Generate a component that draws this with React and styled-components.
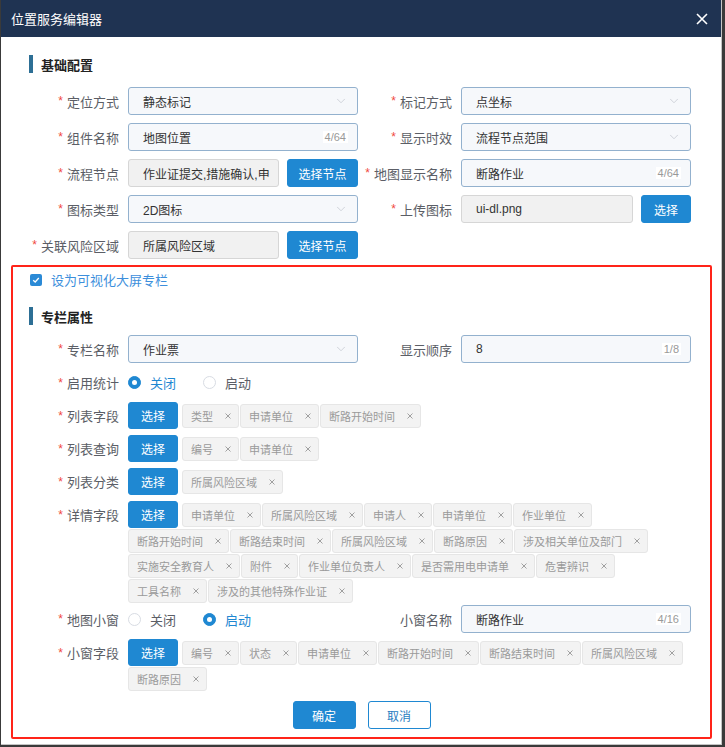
import React from 'react';
import styled, { createGlobalStyle } from 'styled-components';
import { ChevronDown } from 'lucide-react';

const GlobalStyle = createGlobalStyle`
  body {
    margin: 0;
    background: #3a3a3a;
    font-family: "Liberation Sans", "Noto Sans CJK SC", sans-serif;
  }
  * { box-sizing: border-box; }
`;

const BLUE = '#1f88d2';

const Dialog = styled.div`
  width: 721px;
  height: 745px;
  margin-left: 1px;
  background: #fff;
  border-right: 1px solid #c4c4c4;
  border-bottom: 1px solid #c4c4c4;
  overflow: hidden;
`;

const Header = styled.div`
  height: 37px;
  background: #1f3352;
  display: flex;
  align-items: center;
  justify-content: space-between;
  padding: 0 13px 0 10px;
  color: #fff;
  font-size: 13px;
`;

const Body = styled.div`
  padding: 0 9px 0 10px;
`;

const Section = styled.div`
  border: 2px solid ${p => (p.$outlined ? '#ff2419' : 'transparent')};
  border-radius: 2px;
  margin-top: ${p => p.$mt || 0}px;
  padding-bottom: ${p => p.$pb || 0}px;
`;

const SectionTitle = styled.div`
  display: flex;
  align-items: center;
  height: 18px;
  margin: ${p => p.$mt}px 0 ${p => p.$mb}px 16px;
  font-size: 13px;
  font-weight: bold;
  color: #222;
  &::before {
    content: '';
    width: 4px;
    height: 18px;
    background: #2d6f95;
    margin-right: 8px;
  }
`;

const Rows = styled.div`
  display: flex;
  flex-direction: column;
  gap: ${p => p.$gap || 0}px;
  padding-left: 22px;
`;

const Row = styled.div`
  display: grid;
  grid-template-columns: 323px 323px;
  column-gap: 10px;
  margin-top: ${p => p.$mt || 0}px;
`;

const Field = styled.div`
  display: flex;
  align-items: flex-start;
  gap: 9px;
  grid-column: ${p => (p.$wide ? '1 / -1' : 'auto')};
`;

const Label = styled.div`
  width: 84px;
  flex-shrink: 0;
  height: ${p => p.$h || 28}px;
  display: flex;
  align-items: center;
  justify-content: flex-end;
  white-space: nowrap;
  font-size: 13px;
  color: #5b5e66;
`;

const Star = styled.span`
  color: #f0483e;
  margin-right: 4px;
  font-size: 12px;
`;

const Control = styled.div`
  flex: 1;
  display: flex;
  gap: 8px;
  min-width: 0;
`;

const InputBox = styled.div`
  flex: 1;
  min-width: 0;
  height: 28px;
  display: flex;
  align-items: center;
  padding: 0 ${p => (p.$disabled ? 4 : 9)}px 0 14px;
  border: 1px solid ${p => (p.$disabled ? '#d6d6d6' : '#93b1ce')};
  border-radius: 3px;
  background: ${p => (p.$disabled ? '#f1f1f1' : '#f6f8fb')};
  font-size: 12px;
  color: #333;
`;

const InputText = styled.span`
  flex: 1;
  white-space: nowrap;
  overflow: hidden;
`;

const Counter = styled.span`
  font-size: 11px;
  color: #999;
  background: #fff;
  padding: 0 2px;
`;

const Button = styled.button`
  height: ${p => p.$h || 28}px;
  width: ${p => p.$w}px;
  flex-shrink: 0;
  border: 1px solid ${BLUE};
  border-radius: 3px;
  background: ${p => (p.$ghost ? '#fff' : BLUE)};
  color: ${p => (p.$ghost ? '#2a7dbf' : '#fff')};
  font-family: inherit;
  font-size: 12px;
  padding: 0;
  cursor: pointer;
`;

const CheckRow = styled.label`
  display: flex;
  align-items: center;
  gap: 9px;
  height: 13px;
  margin: 6px 0 0 17px;
  font-size: 13px;
  color: #3d8fdc;
`;

const CheckBox = styled.span`
  width: 12px;
  height: 12px;
  border-radius: 2px;
  background: #2b8ad6;
  display: flex;
  align-items: center;
  justify-content: center;
`;

const RadioGroup = styled.div`
  height: 27px;
  display: flex;
  align-items: center;
  gap: 27px;
`;

const RadioItem = styled.span`
  display: flex;
  align-items: center;
  gap: 9px;
  font-size: 13px;
  color: ${p => (p.$on ? BLUE : '#5b5e66')};
`;

const RadioDot = styled.span`
  width: 13px;
  height: 13px;
  border-radius: 50%;
  border: 1px solid ${p => (p.$on ? BLUE : '#d8dce3')};
  background: ${p => (p.$on ? BLUE : '#fff')};
  display: flex;
  align-items: center;
  justify-content: center;
  &::after {
    content: '';
    width: 5px;
    height: 5px;
    border-radius: 50%;
    background: ${p => (p.$on ? '#fff' : 'transparent')};
  }
`;

const TagWrap = styled.div`
  flex: 1;
  display: flex;
  flex-wrap: wrap;
  align-items: center;
  column-gap: 1px;
  row-gap: 1px;
  & > button {
    margin-right: 3px;
  }
`;

const TagBox = styled.span`
  height: 24px;
  display: inline-flex;
  align-items: center;
  padding: 0 7px 0 8px;
  border: 1px solid #e6e6e6;
  border-radius: 3px;
  background: #f3f3f3;
  font-size: 11px;
  color: #9a9a9a;
  white-space: nowrap;
`;

const TagClose = styled.svg`
  margin-left: 12px;
`;

const Footer = styled.div`
  display: flex;
  justify-content: center;
  gap: 12px;
  margin-top: 10px;
`;

const Select = ({ value }) => (
  <InputBox>
    <InputText>{value}</InputText>
    <ChevronDown size={14} strokeWidth={1.3} color="#c3c7cf" />
  </InputBox>
);

const Input = ({ value, count, disabled }) => (
  <InputBox $disabled={disabled}>
    <InputText>{value}</InputText>
    {count && <Counter>{count}</Counter>}
  </InputBox>
);

const Tag = ({ children }) => (
  <TagBox>
    {children}
    <TagClose width="6" height="6" viewBox="0 0 6 6">
      <path d="M0.5 0.5L5.5 5.5M5.5 0.5L0.5 5.5" stroke="#a0a0a0" strokeWidth="1" />
    </TagClose>
  </TagBox>
);

const FieldLabel = ({ text, req = true, h }) => (
  <Label $h={h}>
    {req && <Star>*</Star>}
    {text}
  </Label>
);

const TagField = ({ label, tags }) => (
  <Field $wide>
    <FieldLabel text={label} h={27} />
    <TagWrap>
      <Button $w={50} $h={27}>选择</Button>
      {tags.map((t, i) => (
        <Tag key={i}>{t}</Tag>
      ))}
    </TagWrap>
  </Field>
);

const Radios = ({ on }) => (
  <RadioGroup>
    <RadioItem $on={on === 0}>
      <RadioDot $on={on === 0} />
      关闭
    </RadioItem>
    <RadioItem $on={on === 1}>
      <RadioDot $on={on === 1} />
      启动
    </RadioItem>
  </RadioGroup>
);

export default function App() {
  return (
    <>
      <GlobalStyle />
      <Dialog>
        <Header>
          <span>位置服务编辑器</span>
          <svg width="12" height="12" viewBox="0 0 12 12">
            <path d="M1 1L11 11M11 1L1 11" stroke="#fff" strokeWidth="1.6" />
          </svg>
        </Header>
        <Body>
          <Section>
            <SectionTitle $mt={16} $mb={14}>基础配置</SectionTitle>
            <Rows $gap={8}>
              <Row>
                <Field>
                  <FieldLabel text="定位方式" />
                  <Control><Select value="静态标记" /></Control>
                </Field>
                <Field>
                  <FieldLabel text="标记方式" />
                  <Control><Select value="点坐标" /></Control>
                </Field>
              </Row>
              <Row>
                <Field>
                  <FieldLabel text="组件名称" />
                  <Control><Input value="地图位置" count="4/64" /></Control>
                </Field>
                <Field>
                  <FieldLabel text="显示时效" />
                  <Control><Select value="流程节点范围" /></Control>
                </Field>
              </Row>
              <Row>
                <Field>
                  <FieldLabel text="流程节点" />
                  <Control>
                    <Input disabled value="作业证提交,措施确认,申" />
                    <Button $w={71}>选择节点</Button>
                  </Control>
                </Field>
                <Field>
                  <FieldLabel text="地图显示名称" />
                  <Control><Input value="断路作业" count="4/64" /></Control>
                </Field>
              </Row>
              <Row>
                <Field>
                  <FieldLabel text="图标类型" />
                  <Control><Select value="2D图标" /></Control>
                </Field>
                <Field>
                  <FieldLabel text="上传图标" />
                  <Control>
                    <Input disabled value="ui-dl.png" />
                    <Button $w={50}>选择</Button>
                  </Control>
                </Field>
              </Row>
              <Row>
                <Field>
                  <FieldLabel text="关联风险区域" />
                  <Control>
                    <Input disabled value="所属风险区域" />
                    <Button $w={71}>选择节点</Button>
                  </Control>
                </Field>
              </Row>
            </Rows>
          </Section>

          <Section $outlined $mt={4} $pb={8}>
            <CheckRow>
              <CheckBox>
                <svg width="8" height="8" viewBox="0 0 8 8">
                  <path d="M1.2 4.2L3.2 6L6.8 2" stroke="#fff" strokeWidth="1.3" fill="none" />
                </svg>
              </CheckBox>
              设为可视化大屏专栏
            </CheckRow>
            <SectionTitle $mt={21} $mb={10}>专栏属性</SectionTitle>
            <Rows>
              <Row>
                <Field>
                  <FieldLabel text="专栏名称" />
                  <Control><Select value="作业票" /></Control>
                </Field>
                <Field>
                  <FieldLabel text="显示顺序" req={false} />
                  <Control><Input value="8" count="1/8" /></Control>
                </Field>
              </Row>
              <Row $mt={6}>
                <Field $wide>
                  <FieldLabel text="启用统计" h={27} />
                  <Radios on={0} />
                </Field>
              </Row>
              <Row $mt={6}>
                <TagField label="列表字段" tags={['类型', '申请单位', '断路开始时间']} />
              </Row>
              <Row $mt={6}>
                <TagField label="列表查询" tags={['编号', '申请单位']} />
              </Row>
              <Row $mt={6}>
                <TagField label="列表分类" tags={['所属风险区域']} />
              </Row>
              <Row $mt={6}>
                <TagField
                  label="详情字段"
                  tags={[
                    '申请单位', '所属风险区域', '申请人', '申请单位', '作业单位',
                    '断路开始时间', '断路结束时间', '所属风险区域', '断路原因', '涉及相关单位及部门',
                    '实施安全教育人', '附件', '作业单位负责人', '是否需用电申请单', '危害辨识',
                    '工具名称', '涉及的其他特殊作业证',
                  ]}
                />
              </Row>
              <Row $mt={2}>
                <Field>
                  <FieldLabel text="地图小窗" />
                  <Label as="div" style={{ width: 'auto' }}>
                    <Radios on={1} />
                  </Label>
                </Field>
                <Field>
                  <FieldLabel text="小窗名称" req={false} />
                  <Control><Input value="断路作业" count="4/16" /></Control>
                </Field>
              </Row>
              <Row $mt={6}>
                <TagField
                  label="小窗字段"
                  tags={['编号', '状态', '申请单位', '断路开始时间', '断路结束时间', '所属风险区域', '断路原因']}
                />
              </Row>
            </Rows>
            <Footer>
              <Button $w={63}>确定</Button>
              <Button $w={63} $ghost>取消</Button>
            </Footer>
          </Section>
        </Body>
      </Dialog>
    </>
  );
}
